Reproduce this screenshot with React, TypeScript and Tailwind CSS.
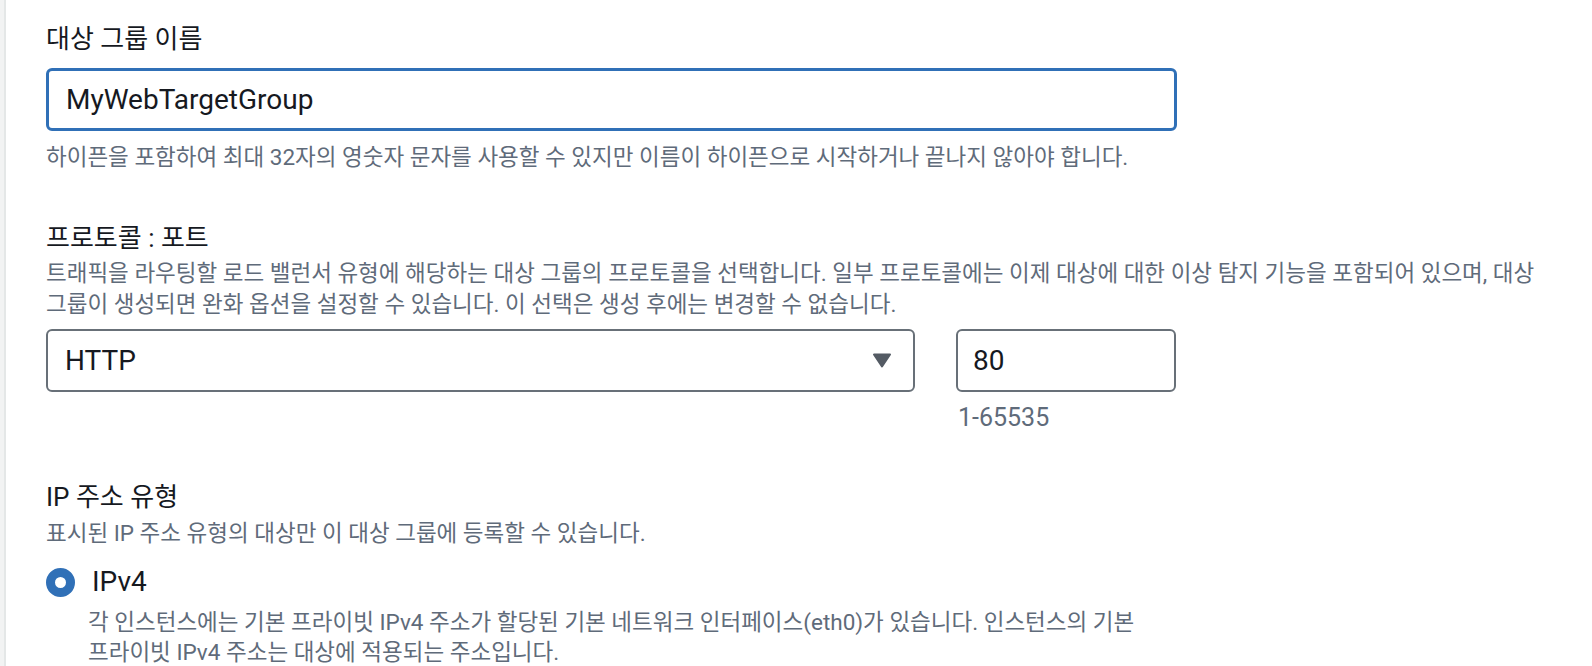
import { useState } from "react";

const labelClass = "text-[26px] leading-[32px] text-[#16191f]";
const descClass = "text-[22.5px] leading-[31px] text-[#5f6b7a] break-keep";

function Caret() {
  return (
    <svg width="20" height="15" viewBox="0 0 20 15" className="shrink-0">
      <path
        d="M2 1.5h16L10 13.5z"
        fill="#545b64"
        stroke="#545b64"
        strokeWidth={2}
        strokeLinejoin="round"
      />
    </svg>
  );
}

export default function App() {
  const [name, setName] = useState("MyWebTargetGroup");
  const [port, setPort] = useState("80");
  const [ipType, setIpType] = useState("ipv4");

  return (
    <div className="min-h-screen bg-white flex font-[Roboto,'Noto_Sans_CJK_KR',sans-serif]">
      <div className="w-[6px] shrink-0 bg-[#f2f3f3] border-r-2 border-[#e4e7e7]" />

      <div className="flex-1 pl-10 pr-4 pt-[23px]">
        {/* target group name */}
        <div>
          <label className={labelClass}>대상 그룹 이름</label>
          <input
            value={name}
            onChange={(e) => setName(e.target.value)}
            className="block mt-[13px] w-[1131px] h-[63px] rounded-[6px] border-[3px] border-[#3070b7] pl-[17px] text-[28px] text-[#16191f] outline-none"
          />
          <p className={`mt-[11px] ${descClass}`}>
            하이픈을 포함하여 최대 32자의 영숫자 문자를 사용할 수 있지만 이름이 하이픈으로 시작하거나 끝나지 않아야 합니다.
          </p>
        </div>

        {/* protocol : port */}
        <div className="mt-[49px]">
          <label className={labelClass}>프로토콜 : 포트</label>
          <p className={`mt-1 ${descClass}`}>
            트래픽을 라우팅할 로드 밸런서 유형에 해당하는 대상 그룹의 프로토콜을 선택합니다. 일부 프로토콜에는 이제 대상에 대한 이상 탐지 기능을 포함되어 있으며, 대상 그룹이 생성되면 완화 옵션을 설정할 수 있습니다. 이 선택은 생성 후에는 변경할 수 없습니다.
          </p>
          <div className="mt-[9px] flex items-start gap-[41px]">
            <button
              type="button"
              className="w-[869px] h-[63px] flex items-center justify-between rounded-[6px] border-2 border-[#687078] pl-[17px] pr-[21px] text-[28px] text-[#16191f]"
            >
              <span>HTTP</span>
              <Caret />
            </button>
            <div>
              <input
                value={port}
                onChange={(e) => setPort(e.target.value)}
                className="block w-[220px] h-[63px] rounded-[6px] border-2 border-[#687078] pl-[15px] text-[28px] text-[#16191f] outline-none"
              />
              <p className="mt-[10px] pl-[2px] text-[25px] leading-[31px] text-[#5f6b7a]">1-65535</p>
            </div>
          </div>
        </div>

        {/* ip address type */}
        <div className="mt-[48px]">
          <label className={labelClass}>IP 주소 유형</label>
          <p className={`mt-[5px] ${descClass}`}>
            표시된 IP 주소 유형의 대상만 이 대상 그룹에 등록할 수 있습니다.
          </p>
          <div
            className="mt-[15px] flex items-center gap-[17px] cursor-pointer"
            onClick={() => setIpType("ipv4")}
          >
            <span
              className={`w-[29px] h-[29px] rounded-full bg-white ${
                ipType === "ipv4" ? "border-[9px] border-[#3070b7]" : "border-2 border-[#687078]"
              }`}
            />
            <span className="text-[28px] leading-[36px] text-[#16191f]">IPv4</span>
          </div>
          <p className="mt-[7px] ml-[42px] max-w-[1100px] text-[22.5px] leading-[30px] text-[#5f6b7a] break-keep">
            각 인스턴스에는 기본 프라이빗 IPv4 주소가 할당된 기본 네트워크 인터페이스(eth0)가 있습니다. 인스턴스의 기본 프라이빗 IPv4 주소는 대상에 적용되는 주소입니다.
          </p>
        </div>
      </div>
    </div>
  );
}
